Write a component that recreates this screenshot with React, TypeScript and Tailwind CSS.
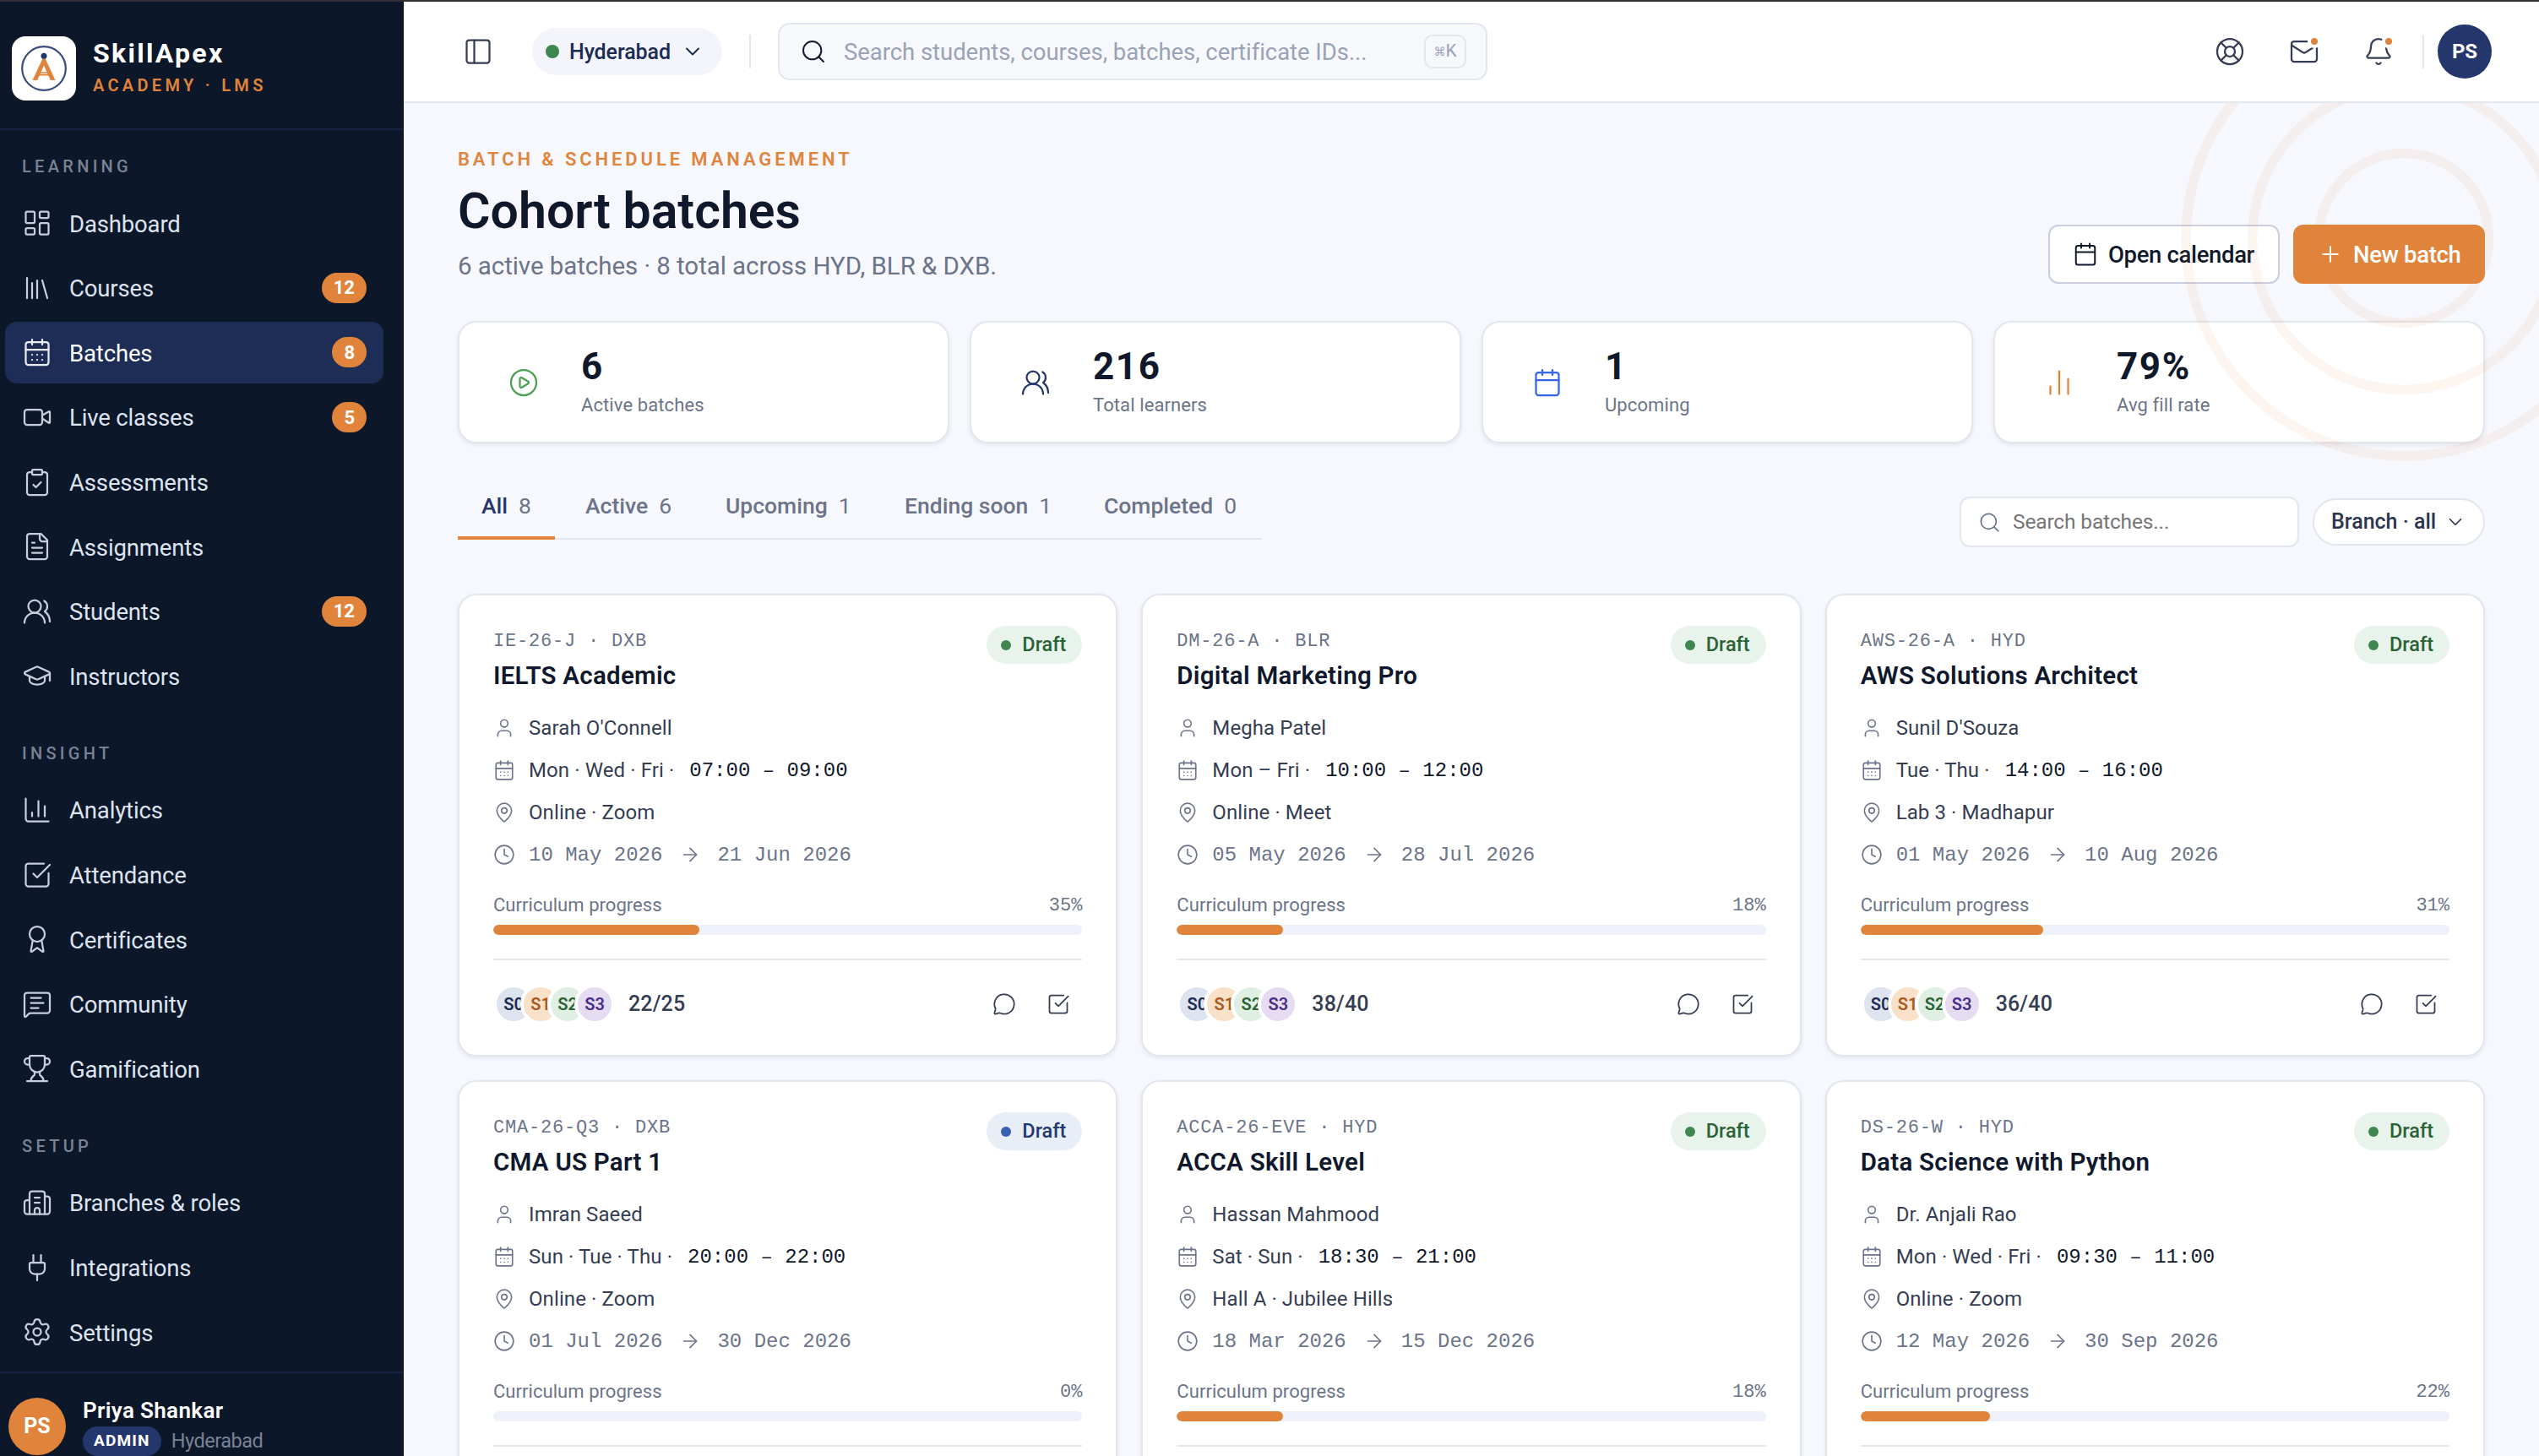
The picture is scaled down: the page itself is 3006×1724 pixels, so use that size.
import React from "react";
import {
  ArrowRight, Award, Bell, Calendar, ChartColumn, ChartNoAxesColumn, ChevronDown, CirclePlay,
  ClipboardCheck, Clock, GraduationCap, LayoutDashboard, LifeBuoy, Mail, MapPin, MessageCircle,
  PanelLeft, Plug, Plus, Search, Settings, SquareCheckBig, Trophy, User, Video,
  type LucideIcon,
} from "lucide-react";

type IconType = LucideIcon | React.FC<{ className?: string; strokeWidth?: number }>;

function svgIcon(children: React.ReactNode) {
  return function Icon({ className, strokeWidth = 2 }: { className?: string; strokeWidth?: number }) {
    return (
      <svg viewBox="0 0 24 24" fill="none" stroke="currentColor" strokeWidth={strokeWidth} strokeLinecap="round" strokeLinejoin="round" className={className}>
        {children}
      </svg>
    );
  };
}

const BooksIcon = svgIcon(<><path d="m16 6 4 14" /><path d="M12 6v14" /><path d="M8 8v12" /><path d="M4 4v16" /></>);
const CalendarDots = svgIcon(
  <>
    <path d="M8 2v4" /><path d="M16 2v4" /><rect width="18" height="18" x="3" y="4" rx="2" /><path d="M3 10h18" />
    <path d="M8 14h.01" /><path d="M12 14h.01" /><path d="M16 14h.01" /><path d="M8 18h.01" /><path d="M12 18h.01" /><path d="M16 18h.01" />
  </>
);
const PeopleIcon = svgIcon(<><path d="M18 21a8 8 0 0 0-16 0" /><circle cx="10" cy="8" r="5" /><path d="M22 20c0-3.37-2-6.5-4-8a5 5 0 0 0-.45-8.3" /></>);
const BuildingIcon = svgIcon(
  <>
    <path d="M10 12h4" /><path d="M10 8h4" /><path d="M14 21v-3a2 2 0 0 0-4 0v3" />
    <path d="M6 10H4a2 2 0 0 0-2 2v7a2 2 0 0 0 2 2h16a2 2 0 0 0 2-2V9a2 2 0 0 0-2-2h-2" />
    <path d="M6 21V5a2 2 0 0 1 2-2h8a2 2 0 0 1 2 2v16" />
  </>
);
const DocIcon = svgIcon(
  <>
    <path d="M15 2H6a2 2 0 0 0-2 2v16a2 2 0 0 0 2 2h12a2 2 0 0 0 2-2V7Z" /><path d="M14 2v4a2 2 0 0 0 2 2h4" />
    <path d="M10 9H8" /><path d="M16 13H8" /><path d="M16 17H8" />
  </>
);
const CommentIcon = svgIcon(
  <>
    <path d="M22 17a2 2 0 0 1-2 2H6.828a2 2 0 0 0-1.414.586l-2.202 2.202A.71.71 0 0 1 2 21.286V5a2 2 0 0 1 2-2h16a2 2 0 0 1 2 2z" />
    <path d="M7 11h10" /><path d="M7 15h6" /><path d="M7 7h8" />
  </>
);

type NavItem = { icon: IconType; label: string; badge?: string; active?: boolean };
const sections: { title: string; items: NavItem[] }[] = [
  {
    title: "LEARNING",
    items: [
      { icon: LayoutDashboard, label: "Dashboard" },
      { icon: BooksIcon, label: "Courses", badge: "12" },
      { icon: CalendarDots, label: "Batches", badge: "8", active: true },
      { icon: Video, label: "Live classes", badge: "5" },
      { icon: ClipboardCheck, label: "Assessments" },
      { icon: DocIcon, label: "Assignments" },
      { icon: PeopleIcon, label: "Students", badge: "12" },
      { icon: GraduationCap, label: "Instructors" },
    ],
  },
  {
    title: "INSIGHT",
    items: [
      { icon: ChartColumn, label: "Analytics" },
      { icon: SquareCheckBig, label: "Attendance" },
      { icon: Award, label: "Certificates" },
      { icon: CommentIcon, label: "Community" },
      { icon: Trophy, label: "Gamification" },
    ],
  },
  {
    title: "SETUP",
    items: [
      { icon: BuildingIcon, label: "Branches & roles" },
      { icon: Plug, label: "Integrations" },
      { icon: Settings, label: "Settings" },
    ],
  },
];

function Sidebar() {
  return (
    <aside className="flex h-full w-[478px] shrink-0 flex-col overflow-hidden bg-[#0c172a]">
      <div className="flex h-[152px] shrink-0 items-center gap-5 border-b-2 border-[#14223f] pb-[1px] pl-[14px] pt-[9px]">
        <div className="flex size-[76px] items-center justify-center rounded-[16px] bg-white">
          <svg viewBox="0 0 76 76" className="size-[76px]">
            <circle cx="38" cy="38" r="25.8" fill="none" stroke="#3a4c80" strokeWidth="2.2" />
            <path d="M38 23 L51.5 52 H45.8 L43.4 46.6 H32.6 L30.2 52 H24.5 Z M38 34.5 L34.6 42.3 H41.4 Z" fill="#e0843c" fillRule="evenodd" />
            <path d="M33.8 44.2 H42.2" stroke="#fff" strokeWidth="1" />
            <circle cx="38" cy="23.2" r="3.5" fill="#24376d" />
          </svg>
        </div>
        <div className="mt-[-3px] flex flex-col">
          <span className="h-10 text-[32px] font-bold leading-10 tracking-[2.3px] text-white">SkillApex</span>
          <span className="h-[34px] text-[20px] font-semibold leading-[37px] tracking-[4.3px] text-[#e0843c]">ACADEMY · LMS</span>
        </div>
      </div>
      <nav className="flex h-[1470px] shrink-0 flex-col gap-[37px] pl-[6px] pr-6 pt-[29px]">
        {sections.map((s) => (
          <div key={s.title} className="flex flex-col">
            <div className="mb-[17px] h-7 pl-[20px] text-[20px] font-medium leading-7 tracking-[4.3px] text-[#7a8393]">{s.title}</div>
            <div className="flex flex-col">
              {s.items.map((it) => (
                <div
                  key={it.label}
                  className={
                    it.active
                      ? "mb-1 flex h-[72.6px] items-center gap-5 rounded-[14px] bg-[#1d2d56] px-5 text-white"
                      : "mb-1 flex h-[72.6px] items-center gap-5 px-5 text-[#dde3ef]"
                  }
                >
                  <it.icon className={it.active ? "size-9 text-[#e9ecf3]" : "size-9 text-[#c6cedd]"} strokeWidth={1.5} />
                  <span className="flex-1 pt-[2px] text-[27.5px] tracking-[-0.15px]">{it.label}</span>
                  {it.badge && (
                    <span className="flex h-9 items-center rounded-full bg-[#e0843c] px-[14px] text-[22px] font-bold text-white">{it.badge}</span>
                  )}
                </div>
              ))}
            </div>
          </div>
        ))}
      </nav>
      <div className="flex h-[110px] shrink-0 items-start gap-5 border-t-2 border-[#14223f] pl-[10px] pt-[29px]">
        <div className="flex size-[68px] shrink-0 items-center justify-center rounded-full bg-[#e0843c] text-[25px] font-bold text-white">PS</div>
        <div className="flex flex-col">
          <span className="h-[34px] text-[26px] font-semibold leading-[30px] tracking-[0.35px] text-white">Priya Shankar</span>
          <div className="flex items-center gap-3">
            <span className="flex h-[35px] items-center rounded-full bg-[#24376d] px-[13px] text-[19px] font-bold tracking-[1.2px] text-white">ADMIN</span>
            <span className="text-[23.5px] leading-[35px] tracking-[-0.5px] text-[#7a8393]">Hyderabad</span>
          </div>
        </div>
      </div>
    </aside>
  );
}

function NotifyIcon({ icon: Icon, dot }: { icon: IconType; dot?: boolean }) {
  return (
    <div className="relative flex size-[72px] items-center justify-center">
      <Icon className="size-9 text-[#353d52]" strokeWidth={1.5} />
      {dot && <span className="absolute right-[16px] top-[16px] size-4 rounded-full border-4 border-white bg-[#e0843c]" />}
    </div>
  );
}

function Topbar() {
  return (
    <header className="flex h-[120px] shrink-0 items-center border-b-2 border-[#e2e7ee] bg-white pl-[70px] pr-14">
      <PanelLeft className="size-9 text-[#353d52]" strokeWidth={1.5} />
      <div className="ml-[46px] flex h-14 w-[225px] items-center rounded-full bg-[#f3f5fb] pl-4 text-[#1c2c55]">
        <span className="size-4 rounded-full bg-[#3f8750]" />
        <span className="ml-3 w-[132px] pt-px text-[25px] font-medium tracking-[-0.1px]">Hyderabad</span>
        <ChevronDown className="size-7" strokeWidth={1.7} />
      </div>
      <div className="ml-8 h-10 w-[2px] bg-[#e2e7ee]" />
      <div className="ml-8 flex h-[68px] w-[840px] items-center rounded-[14px] border-2 border-[#e2e6ee] bg-[#f7f8fc] pl-[24px] pr-[23px]">
        <Search className="size-8 text-[#131b2e]" strokeWidth={1.5} />
        <span className="ml-[20px] flex-1 pt-[2px] text-[27.5px] tracking-[-0.05px] text-[#9aa2b6]">Search students, courses, batches, certificate IDs...</span>
        <span className="flex h-10 w-[50px] items-center justify-center rounded-[10px] border-2 border-[#e2e6ee] font-['Liberation_Mono','DejaVu_Sans',monospace] text-[22px] text-[#9aa2b6]">
          <span className="font-['DejaVu_Sans',sans-serif] text-[14px]">⌘</span>K
        </span>
      </div>
      <div className="ml-auto flex items-center gap-4">
        <NotifyIcon icon={LifeBuoy} />
        <NotifyIcon icon={Mail} dot />
        <NotifyIcon icon={Bell} dot />
      </div>
      <div className="ml-4 h-10 w-[2px] bg-[#e2e7ee]" />
      <div className="ml-4 flex size-16 items-center justify-center rounded-full bg-[#24376d] text-[24px] font-bold text-white">PS</div>
    </header>
  );
}

const stats: { icon: IconType; value: string; label: string; color: string }[] = [
  { icon: CirclePlay, value: "6", label: "Active batches", color: "text-[#4a9f52]" },
  { icon: PeopleIcon, value: "216", label: "Total learners", color: "text-[#24376d]" },
  { icon: Calendar, value: "1", label: "Upcoming", color: "text-[#3464e8]" },
  { icon: ChartNoAxesColumn, value: "79%", label: "Avg fill rate", color: "text-[#e0843c]" },
];

const tabs = [
  { label: "All", count: 8, w: "w-[115px]" },
  { label: "Active", count: 6, w: "w-[158px]" },
  { label: "Upcoming", count: 1, w: "w-[204px]" },
  { label: "Ending soon", count: 1, w: "w-[228px]" },
  { label: "Completed", count: 0, w: "w-[215px]" },
];

type Batch = {
  code: string; title: string; who: string; days: string; time: string; place: string;
  from: string; to: string; progress: number; seats?: string; blue?: boolean;
};
const batches: Batch[] = [
  { code: "IE-26-J · DXB", title: "IELTS Academic", who: "Sarah O'Connell", days: "Mon · Wed · Fri ·", time: "07:00 – 09:00", place: "Online · Zoom", from: "10 May 2026", to: "21 Jun 2026", progress: 35, seats: "22/25" },
  { code: "DM-26-A · BLR", title: "Digital Marketing Pro", who: "Megha Patel", days: "Mon – Fri ·", time: "10:00 – 12:00", place: "Online · Meet", from: "05 May 2026", to: "28 Jul 2026", progress: 18, seats: "38/40" },
  { code: "AWS-26-A · HYD", title: "AWS Solutions Architect", who: "Sunil D'Souza", days: "Tue · Thu ·", time: "14:00 – 16:00", place: "Lab 3 · Madhapur", from: "01 May 2026", to: "10 Aug 2026", progress: 31, seats: "36/40" },
  { code: "CMA-26-Q3 · DXB", title: "CMA US Part 1", who: "Imran Saeed", days: "Sun · Tue · Thu ·", time: "20:00 – 22:00", place: "Online · Zoom", from: "01 Jul 2026", to: "30 Dec 2026", progress: 0, blue: true },
  { code: "ACCA-26-EVE · HYD", title: "ACCA Skill Level", who: "Hassan Mahmood", days: "Sat · Sun ·", time: "18:30 – 21:00", place: "Hall A · Jubilee Hills", from: "18 Mar 2026", to: "15 Dec 2026", progress: 18 },
  { code: "DS-26-W · HYD", title: "Data Science with Python", who: "Dr. Anjali Rao", days: "Mon · Wed · Fri ·", time: "09:30 – 11:00", place: "Online · Zoom", from: "12 May 2026", to: "30 Sep 2026", progress: 22 },
];

const avatars = [
  { t: "S0", c: "bg-[#dde3ef] text-[#1c2c55]" },
  { t: "S1", c: "bg-[#f9e0c8] text-[#a85a20]" },
  { t: "S2", c: "bg-[#dfefe3] text-[#2a6338]" },
  { t: "S3", c: "bg-[#e5dcf2] text-[#4a2f8a]" },
];

function Row({ icon: Icon, children }: { icon: IconType; children: React.ReactNode }) {
  return (
    <div className="flex h-[50px] items-center text-[24px] tracking-[0.1px] text-[#353d52]">
      <Icon className="mr-4 size-[26px] shrink-0 text-[#6b7488]" strokeWidth={1.5} />
      {children}
    </div>
  );
}

function BatchCard({ b }: { b: Batch }) {
  return (
    <article className="flex h-[548px] flex-col rounded-[22px] border-2 border-[#e2e7ee] bg-white px-10 pt-9 shadow-[0_2px_5px_rgba(20,32,66,0.09)]">
      <div className="flex h-[98px] shrink-0 items-start justify-between">
        <div className="flex flex-col">
          <span className="h-[34px] font-['Liberation_Mono',monospace] text-[22px] leading-[37px] tracking-[0.8px] text-[#6b7488]">{b.code}</span>
          <span className="mt-[5px] h-10 text-[29.5px] font-semibold leading-10 tracking-[0.25px] text-[#10182c]">{b.title}</span>
        </div>
        <span
          className={
            b.blue
              ? "flex h-[45px] w-[113px] items-center rounded-full bg-[#e8eef6] pl-[17px] text-[23.5px] font-medium text-[#1f3a70]"
              : "flex h-[45px] w-[113px] items-center rounded-full bg-[#e8f3eb] pl-[17px] text-[23.5px] font-medium text-[#2a6338]"
          }
        >
          <span className={b.blue ? "mr-[13px] size-3 rounded-full bg-[#3862b0]" : "mr-[13px] size-3 rounded-full bg-[#3f8750]"} />
          Draft
        </span>
      </div>
      <div className="mt-[-2px] flex shrink-0 flex-col">
        <Row icon={User}>{b.who}</Row>
        <Row icon={CalendarDots}>
          {b.days}
          <span className="ml-[18px] pt-[2px] font-['Liberation_Mono',monospace] tracking-normal text-[#10182c]">{b.time}</span>
        </Row>
        <Row icon={MapPin}>{b.place}</Row>
        <Row icon={Clock}>
          <span className="flex items-center pt-[2px] font-['Liberation_Mono',monospace] tracking-normal text-[#6b7488]">
            {b.from}
            <ArrowRight className="mb-[2px] ml-[20px] mr-[19px] size-[26px]" strokeWidth={1.5} />
            {b.to}
          </span>
        </Row>
      </div>
      <div className="mt-[18px] flex h-8 shrink-0 items-center justify-between text-[22px] text-[#6b7488]">
        <span className="tracking-[0.05px]">Curriculum progress</span>
        <span className="pt-[2px] font-['Liberation_Mono',monospace]">{b.progress}%</span>
      </div>
      <div className="mt-[8px] h-3 shrink-0 overflow-hidden rounded-full bg-[#eef1fa]">
        <div className="h-full rounded-full bg-[#e0843c]" style={{ width: `${b.progress}%` }} />
      </div>
      <div className="mt-7 flex h-[106px] shrink-0 items-center border-t-2 border-[#e2e6ee]">
        {b.seats && (
          <>
            <div className="flex -space-x-4">
              {avatars.map((a) => (
                <span key={a.t} className={"flex size-12 items-center justify-center rounded-full border-4 border-white text-[20px] font-semibold " + a.c}>{a.t}</span>
              ))}
            </div>
            <span className="ml-4 text-[25px] font-medium tracking-[0.15px] text-[#353d52]">{b.seats}</span>
            <div className="ml-auto flex gap-9 pr-[14px] text-[#353d52]">
              <MessageCircle className="size-7" strokeWidth={1.5} />
              <SquareCheckBig className="size-7" strokeWidth={1.5} />
            </div>
          </>
        )}
      </div>
    </article>
  );
}

export default function App() {
  return (
    <div className="flex h-[1724px] w-[3006px] flex-col overflow-hidden bg-[#f7f8fd] font-['Roboto',sans-serif]">
      <div className="h-[2px] shrink-0 bg-[#332f36]" />
      <div className="flex min-h-0 flex-1">
        <Sidebar />
        <div className="flex min-w-0 flex-1 flex-col">
          <Topbar />
          <main className="relative flex min-h-0 flex-1 flex-col overflow-hidden px-16 pt-[52px]">
            <div className="flex h-[162px] shrink-0 items-end justify-between">
              <div className="flex h-full flex-col">
                <span className="h-7 text-[22px] font-semibold leading-[29px] tracking-[3.9px] text-[#e0843c]">BATCH &amp; SCHEDULE MANAGEMENT</span>
                <h1 className="mt-3 h-[72px] text-[59px] font-semibold leading-[72px] text-[#10182c]">Cohort batches</h1>
                <p className="mt-[9px] h-10 text-[29.5px] leading-10 tracking-[-0.06px] text-[#6b7488]">6 active batches · 8 total across HYD, BLR &amp; DXB.</p>
              </div>
              <div className="flex gap-4">
                <button className="flex h-[70px] w-[274px] items-center rounded-[12px] border-2 border-[#c9cddf] bg-white pl-[27px] text-[27.5px] font-medium tracking-[-0.35px] text-[#10182c]">
                  <Calendar className="mr-3 size-[30px]" strokeWidth={1.6} />
                  <span className="pt-px">Open calendar</span>
                </button>
                <button className="flex h-[70px] w-[227px] items-center rounded-[12px] bg-[#e0843c] pl-[29px] text-[27.5px] font-medium tracking-[-0.35px] text-white">
                  <Plus className="mr-3 size-[30px]" strokeWidth={1.6} />
                  <span className="pt-px">New batch</span>
                </button>
              </div>
            </div>

            <div className="mt-11 grid h-[145px] shrink-0 grid-cols-4 gap-6">
              {stats.map((s) => (
                <div key={s.label} className="flex items-center rounded-[22px] border-2 border-[#e2e7ee] bg-white pl-[58px] shadow-[0_2px_5px_rgba(20,32,66,0.09)]">
                  <s.icon className={"size-9 " + s.color} strokeWidth={1.5} />
                  <div className="ml-[50px] flex flex-col">
                    <span className="h-[50px] text-[44px] font-bold leading-[47px] tracking-[1.6px] text-[#10182c]">{s.value}</span>
                    <span className="mt-1 h-[30px] text-[22px] leading-[29px] tracking-[0.1px] text-[#6b7488]">{s.label}</span>
                  </div>
                </div>
              ))}
            </div>

            <div className="mt-[39px] flex h-[84px] shrink-0 items-start justify-between">
              <div className="flex h-[75px] gap-2 border-b-2 border-[#e2e8f0]">
                {tabs.map((t, i) => (
                  <div
                    key={t.label}
                    className={
                      "-mb-[2px] flex items-start gap-[13px] pl-7 pt-4 text-[26.5px] leading-[38px] text-[#6b7488] " +
                      (i === 0 ? "border-b-4 border-[#e0843c] " : "") + t.w
                    }
                  >
                    <span className={i === 0 ? "font-medium text-[#24376d]" : "font-medium"}>{t.label}</span>
                    <span>{t.count}</span>
                  </div>
                ))}
              </div>
              <div className="flex h-[60px] items-center gap-4 self-end">
                <div className="flex h-[60px] w-[402px] items-center rounded-[12px] border-2 border-[#e2e7ee] bg-white pl-5 text-[24.5px] tracking-[-0.15px] text-[#757575]">
                  <Search className="mr-[14px] size-[27px] text-[#64708a]" strokeWidth={1.5} />
                  <span className="pt-px">Search batches...</span>
                </div>
                <div className="flex h-14 w-[204px] items-center rounded-full border-2 border-[#e2e7ee] bg-white pl-5 text-[25px] font-medium text-[#2d3550]">
                  <span className="w-[134px]">Branch · all</span>
                  <ChevronDown className="size-[26px]" strokeWidth={1.6} />
                </div>
              </div>
            </div>

            <div className="mt-[55px] grid shrink-0 grid-cols-3 gap-7">
              {batches.map((b) => (
                <BatchCard key={b.code} b={b} />
              ))}
            </div>

            <svg viewBox="0 0 540 540" className="pointer-events-none absolute right-[-110px] top-[-110px] size-[540px]">
              <g fill="none" stroke="#e0843c" strokeOpacity="0.08" strokeWidth="11.5">
                <circle cx="270" cy="270" r="100.5" />
                <circle cx="270" cy="270" r="179.5" />
                <circle cx="270" cy="270" r="258" />
              </g>
            </svg>
          </main>
        </div>
      </div>
    </div>
  );
}
